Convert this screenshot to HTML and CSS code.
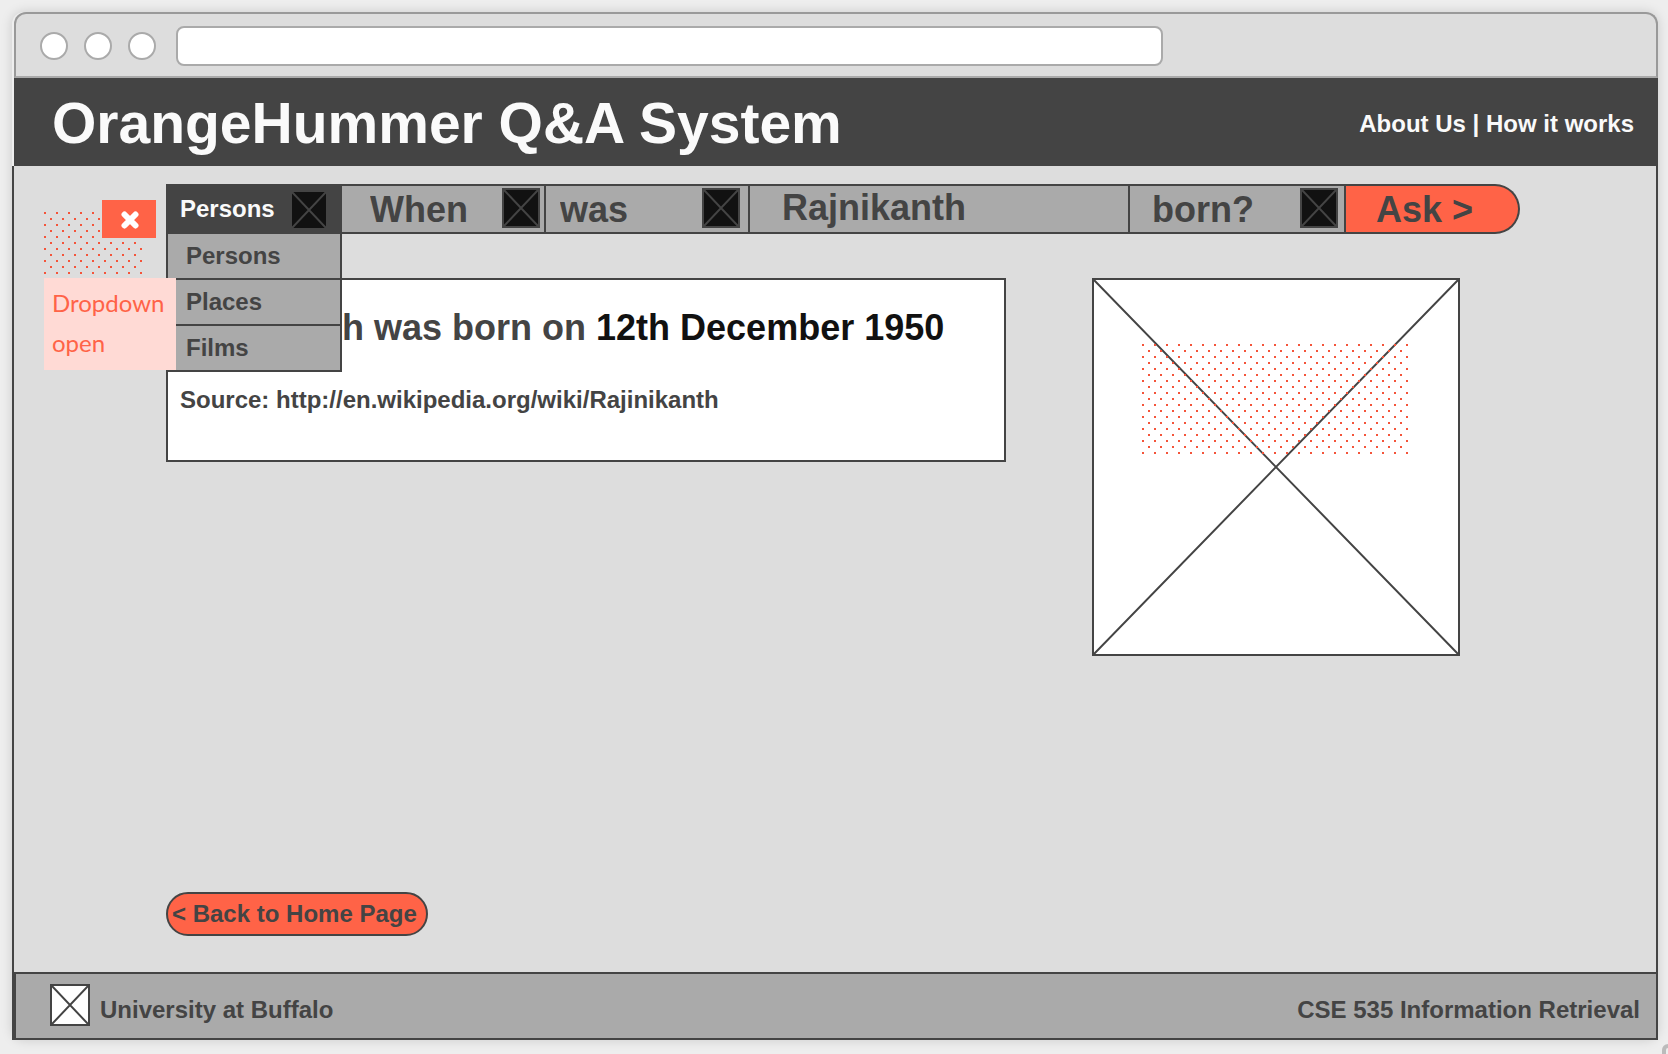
FILE: index.html
```html
<!DOCTYPE html>
<html lang="en">
<head>
<meta charset="utf-8">
<meta name="viewport" content="width=device-width, initial-scale=1">
<title>OrangeHummer Q&amp;A System</title>
<link rel="stylesheet" href="styles.css">
</head>
<body>
<svg class="defs" aria-hidden="true">
  <symbol id="cross" viewBox="0 0 100 100" preserveAspectRatio="none">
    <path d="M0 0L100 100M100 0L0 100" fill="none" stroke="currentColor" vector-effect="non-scaling-stroke"/>
  </symbol>
</svg>
<div class="window">
  <div class="chrome">
    <span class="dot"></span><span class="dot"></span><span class="dot"></span>
    <input class="address" type="text" aria-label="Address">
  </div>
  <header class="header">
    <h1 class="title">OrangeHummer Q&amp;A System</h1>
    <nav class="links"><a href="#about">About Us</a> | <a href="#how">How it works</a></nav>
  </header>
  <main class="main">
    <form class="query">
      <div class="category">
        <button class="category-toggle" type="button" aria-expanded="true">Persons
          <svg class="arrow" aria-hidden="true"><use href="#cross"/></svg>
        </button>
        <ul class="menu">
          <li><button type="button">Persons</button></li>
          <li><button type="button">Places</button></li>
          <li><button type="button">Films</button></li>
        </ul>
      </div>
      <label class="field field-question">
        <select aria-label="Question word"><option>When</option></select>
        <svg class="arrow" aria-hidden="true"><use href="#cross"/></svg>
      </label>
      <label class="field field-verb">
        <select aria-label="Verb"><option>was</option></select>
        <svg class="arrow" aria-hidden="true"><use href="#cross"/></svg>
      </label>
      <input class="subject" type="text" aria-label="Subject" value="Rajnikanth">
      <label class="field field-action">
        <select aria-label="Action"><option>born?</option></select>
        <svg class="arrow" aria-hidden="true"><use href="#cross"/></svg>
      </label>
      <button class="ask" type="submit">Ask &gt;</button>
    </form>
    <div class="results">
      <section class="answer">
        <p class="answer-text">Rajnikanth was born on <strong>12th December 1950</strong></p>
        <p class="source">Source: http://en.wikipedia.org/wiki/Rajinikanth</p>
      </section>
      <div class="photo">
        <svg class="photo-cross" aria-hidden="true"><use href="#cross"/></svg>
        <span class="dots photo-dots"></span>
      </div>
    </div>
    <button class="back" type="button">&lt; Back to Home Page</button>
    <aside class="note">
      <span class="dots note-dots"></span>
      <button class="note-close" type="button" aria-label="Close note">
        <svg width="18" height="18" viewBox="0 0 18 18" aria-hidden="true"><path d="M3.5 3.5L14.5 14.5M14.5 3.5L3.5 14.5" stroke="#fff" stroke-width="6" stroke-linecap="round"/></svg>
      </button>
      <p class="note-text">Dropdown open</p>
    </aside>
  </main>
  <footer class="footer">
    <svg class="logo" aria-hidden="true"><use href="#cross"/></svg>
    <span>University at Buffalo</span>
    <span class="course">CSE 535 Information Retrieval</span>
  </footer>
</div>
<span class="corner"></span>
</body>
</html>
```
FILE: styles.css
```css
:root {
  --ink: #444;
  --panel: #ddd;
  --field: #aaa;
  --accent: #ff6347;
  --speck: #f4543a;
}

* { box-sizing: border-box; }

body {
  margin: 0;
  min-height: 100vh;
  padding: 12px 10px 14px 12px;
  display: flex;
  position: relative;
  overflow: hidden;
  background: #eee;
  color: var(--ink);
  font: bold 24px/28px "Liberation Sans", Arial, sans-serif;
}

.defs { position: absolute; width: 0; height: 0; }

h1, p, ul { margin: 0; padding: 0; }

button, input, select {
  margin: 0;
  border: 0;
  border-radius: 0;
  padding: 0;
  background: none;
  color: inherit;
  font: inherit;
}

button { cursor: pointer; text-align: left; }

.window {
  flex: 1;
  min-width: 0;
  display: flex;
  flex-direction: column;
  border-radius: 12px;
  box-shadow: 0 0 12px rgba(0, 0, 0, 0.15);
}

.chrome {
  display: flex;
  align-items: center;
  gap: 16px;
  height: 66px;
  margin-left: 2px;
  padding: 2px 24px 0;
  border: 2px solid #999;
  border-bottom-color: #aaa;
  border-radius: 12px 12px 0 0;
  background: var(--panel);
}

.dot {
  width: 28px;
  height: 28px;
  border: 2px solid #aaa;
  border-radius: 50%;
  background: #fff;
}

.address {
  width: 62%;
  height: 40px;
  margin-left: 4px;
  border: 2px solid #aaa;
  border-radius: 8px;
  background: #fff;
}

.header {
  display: flex;
  align-items: center;
  justify-content: space-between;
  height: 88px;
  margin-left: 2px;
  padding: 2px 24px 0 38px;
  background: var(--ink);
  color: #fafafa;
}

.title { font-size: 57px; line-height: 64px; }

.links { padding-top: 2px; }
.links a { color: inherit; text-decoration: none; }

.main {
  flex: 1;
  display: flex;
  flex-direction: column;
  align-items: flex-start;
  position: relative;
  padding: 18px 136px 36px 152px;
  border: solid var(--ink);
  border-width: 0 2px;
  background: var(--panel);
}

.query {
  display: flex;
  width: 100%;
  height: 50px;
  font-size: 36px;
  line-height: 40px;
}

.category { position: relative; width: 176px; font-size: 24px; line-height: 28px; }

.category-toggle {
  display: flex;
  align-items: center;
  justify-content: space-between;
  width: 100%;
  height: 50px;
  padding: 0 14px;
  background: var(--ink);
  color: #fafafa;
}

.arrow {
  flex: none;
  width: 38px;
  height: 40px;
  border: 2px solid var(--ink);
  background: #111;
  color: var(--ink);
  stroke-width: 2px;
  pointer-events: none;
}

.category-toggle .arrow { margin-top: 2px; }

.menu {
  position: absolute;
  top: 50px;
  left: 0;
  z-index: 1;
  width: 100%;
  border: solid var(--ink);
  border-width: 0 2px;
  background: var(--field);
  list-style: none;
}

.menu button {
  display: block;
  width: 100%;
  height: 46px;
  padding: 0 16px 0 18px;
  border-bottom: 2px solid var(--ink);
}

.field, .subject {
  border: solid var(--ink);
  border-width: 2px 2px 2px 0;
  background: var(--field);
}

.field { display: flex; align-items: center; padding-bottom: 2px; }

.field select { flex: 1; min-width: 0; height: 44px; padding-top: 4px; appearance: none; }

.field-question { width: 204px; padding-left: 28px; padding-right: 4px; }
.field-verb { width: 204px; padding-left: 14px; padding-right: 8px; }
.field-action { width: 216px; padding-left: 22px; padding-right: 6px; }

.subject { flex: 1; min-width: 0; padding: 0 32px 2px; }

.ask {
  width: 174px;
  padding: 2px 0 0 30px;
  border: solid var(--ink);
  border-width: 2px 2px 2px 0;
  border-radius: 0 25px 25px 0;
  background: var(--accent);
}

.results {
  display: flex;
  justify-content: space-between;
  align-items: flex-start;
  width: 100%;
  margin-top: 44px;
  padding-right: 60px;
}

.answer {
  width: 840px;
  height: 184px;
  padding: 26px 12px;
  border: 2px solid var(--ink);
  background: #fff;
}

.answer-text { font-size: 36px; line-height: 44px; white-space: nowrap; }
.answer-text strong { color: #111; }
.source { margin-top: 36px; }

.photo {
  position: relative;
  width: 368px;
  height: 378px;
  border: 2px solid var(--ink);
  background: #fff;
}

.photo-cross { display: block; width: 100%; height: 100%; stroke-width: 2px; }

.dots {
  position: absolute;
  background:
    conic-gradient(from 270deg at 2px 2px, var(--speck) 90deg, transparent 0) 0 0 / 12px 12px,
    conic-gradient(from 270deg at 2px 2px, var(--speck) 90deg, transparent 0) 6px 6px / 12px 12px;
}

.photo-dots { left: 48px; top: 64px; width: 266px; height: 110px; }

.back {
  height: 44px;
  margin-top: auto;
  padding: 0 9px 0 4px;
  border: 2px solid var(--ink);
  border-radius: 22px;
  background: var(--accent);
}

.note {
  position: absolute;
  top: 34px;
  left: 30px;
  z-index: 2;
  width: 132px;
  padding-top: 78px;
}

.note-dots { left: 0; top: 12px; width: 98px; height: 62px; }

.note-close {
  position: absolute;
  top: 0;
  left: 58px;
  display: grid;
  place-items: center;
  width: 54px;
  height: 38px;
  padding: 2px 0 0 2px;
  background: var(--accent);
}

.note-text {
  padding: 5px 8px 7px;
  background: #ffdad5;
  color: var(--accent);
  font: 24px/40px Lato, sans-serif;
}

.footer {
  display: flex;
  align-items: center;
  gap: 10px;
  height: 68px;
  padding: 0 16px 2px 34px;
  border: 2px solid var(--ink);
  border-left-width: 4px;
  background: var(--field);
}

.footer span { padding-top: 10px; }

.logo {
  width: 40px;
  height: 42px;
  border: 2px solid var(--ink);
  background: #fff;
  stroke-width: 2px;
}

.course { margin-left: auto; }

.corner {
  position: absolute;
  right: -14px;
  bottom: -10px;
  width: 20px;
  height: 20px;
  border: 4px solid #bbb;
  border-radius: 6px;
}
```
